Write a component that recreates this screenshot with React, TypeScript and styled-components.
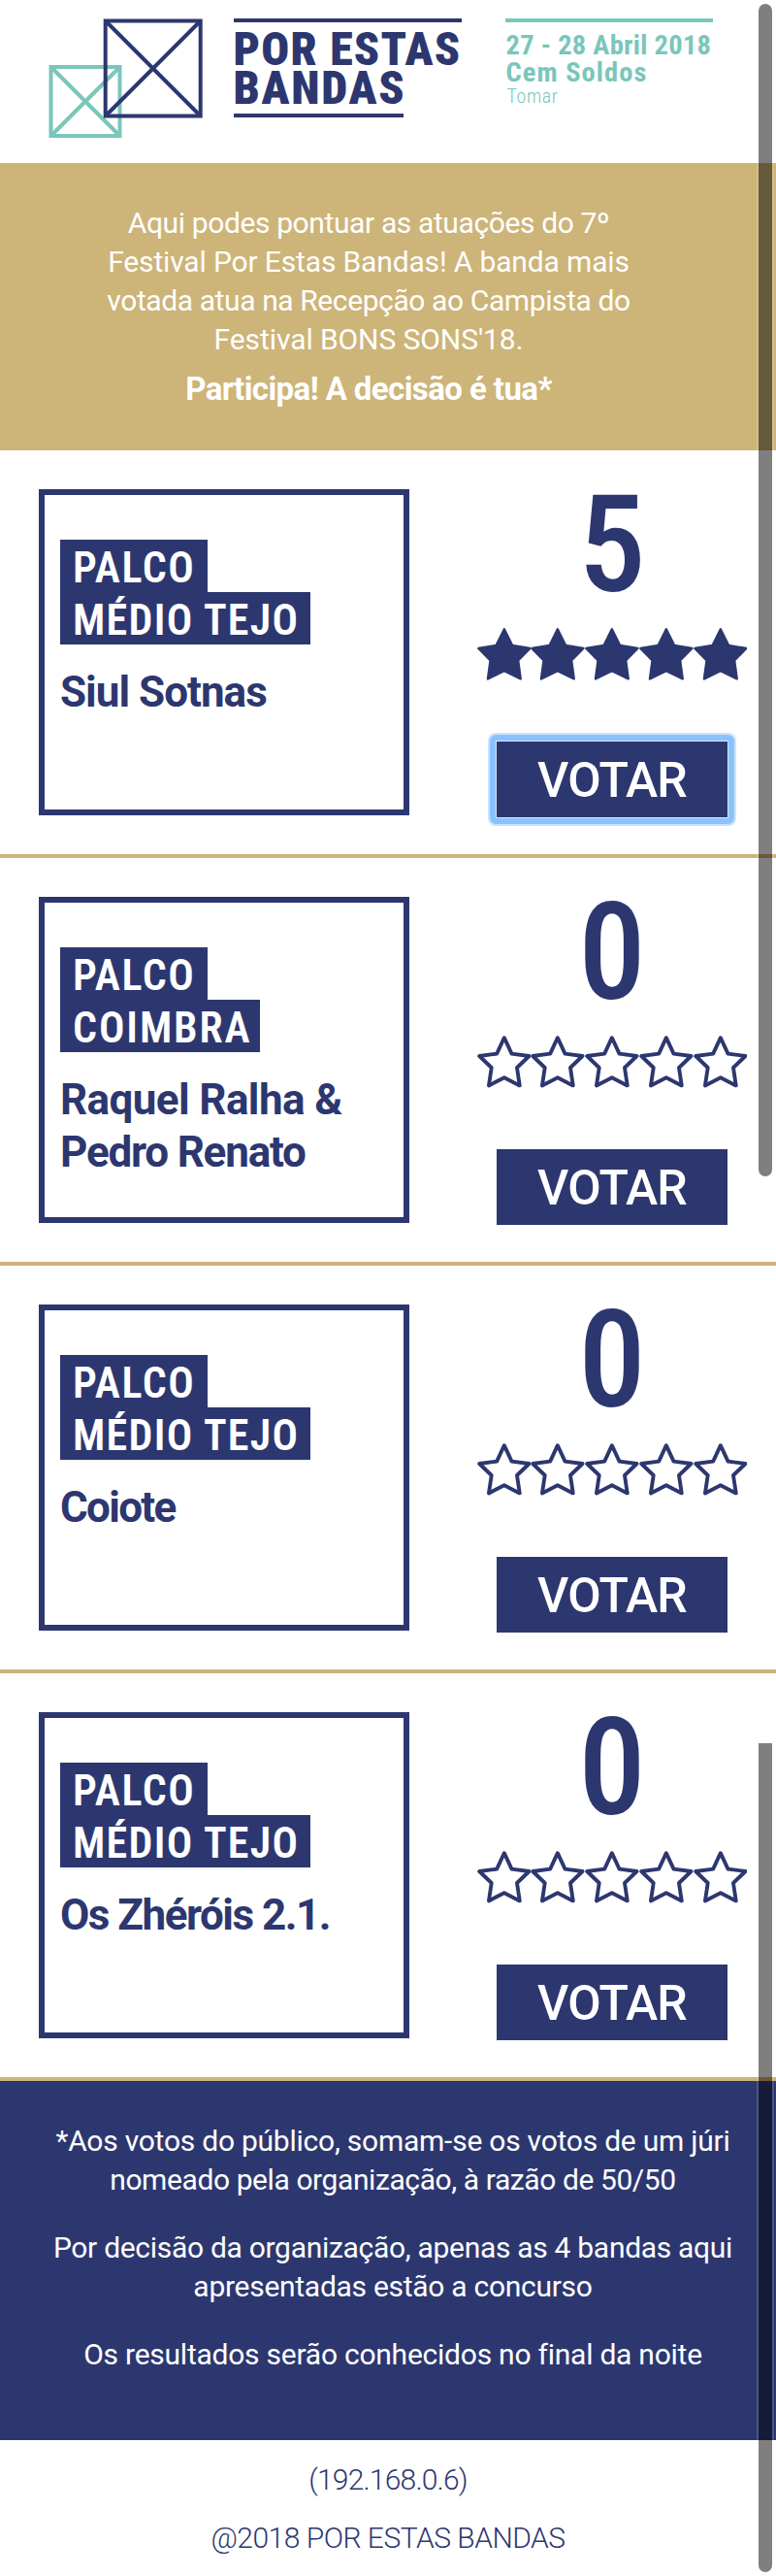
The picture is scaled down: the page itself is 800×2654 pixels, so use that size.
import React from 'react';
import styled, { createGlobalStyle, css } from 'styled-components';

const NAVY = '#2d376f';
const GOLD = '#cdb479';
const TEAL = '#7ac6bb';

const GlobalStyle = createGlobalStyle`
  *, *::before, *::after { box-sizing: border-box; }
  html, body { margin: 0; padding: 0; background: #fff; }
  body {
    font-family: Roboto, "Liberation Sans", sans-serif;
    color: ${NAVY};
    overflow: hidden;
  }
  h1, h2, h3, p { margin: 0; font-weight: inherit; }
`;

const Page = styled.div`
  position: relative;
  width: 800px;
  height: 2654px;
  overflow: hidden;
`;

/* One line of text with its own tracking */
const Line = styled.span<{ $tracking?: number }>`
  display: block;
  white-space: nowrap;
  letter-spacing: ${({ $tracking = 0 }) => $tracking}px;
`;

const Header = styled.header`
  display: flex;
  align-items: flex-start;
  height: 168px;
  padding: 18.5px 0 0 50px;
  font-stretch: 75%;
`;

const Mark = styled.svg`
  display: block;
  flex: none;
  width: 160px;
  height: 124px;
  margin-right: 30.5px;
`;

const Wordmark = styled.h1`
  flex: none;
  width: 235.5px;
  margin-right: 44.5px;
  padding-top: 8.8px;
  border-top: 4.5px solid ${NAVY};
  font-size: 48px;
  font-weight: 900;
  line-height: 39.2px;

  &::after {
    content: '';
    display: block;
    width: 175px;
    height: 4.5px;
    margin-top: 7px;
    background: ${NAVY};
  }
`;

const EventInfo = styled.div`
  flex: none;
  width: 214.5px;
  padding: 10.5px 0 0 1px;
  border-top: 4px solid ${TEAL};
  color: ${TEAL};
  font-size: 28.5px;
  font-weight: 700;
  line-height: 27.5px;
`;

const Town = styled(Line)`
  font-size: 20px;
  font-weight: 300;
  line-height: 22px;
  padding-left: 1px;
`;

const Intro = styled.section`
  height: 296px;
  padding: 42px 40px 0 0;
  background: ${GOLD};
  color: #fff;
  font-size: 30px;
  line-height: 40px;
  text-align: center;
`;

const Callout = styled.p`
  margin-top: 11px;
  font-size: 33px;
  font-weight: 700;
`;

const BandRow = styled.article`
  display: flex;
  height: 420px;
  padding: 40px 0 0 40px;
  border-bottom: 4px solid ${GOLD};
`;

const Card = styled.div`
  flex: none;
  width: 382px;
  height: 336px;
  padding: 46px 0 0 16px;
  border: 6px solid ${NAVY};
`;

const StageLabel = styled.div<{ $width: number }>`
  width: ${({ $width }) => $width}px;
  height: 54px;
  padding: 2px 0 0 13px;
  background: ${NAVY};
  color: #fff;
  font-size: 44px;
  font-stretch: 75%;
  font-weight: 600;
  line-height: 54px;
`;

const BandName = styled.h2`
  margin-top: 22px;
  font-size: 44px;
  font-weight: 700;
  line-height: 54px;
`;

const VotePanel = styled.div`
  display: flex;
  flex-direction: column;
  align-items: center;
  flex: none;
  width: 280px;
  margin: -8px 0 0 69px;
`;

const Score = styled.div`
  height: 130px;
  font-size: 139px;
  font-stretch: 75%;
  font-weight: 500;
  line-height: 132px;
`;

const Stars = styled.div`
  display: flex;
  margin-top: 21px;
`;

const StarIcon = styled.svg`
  display: block;
  width: 55.7px;
  height: 54px;
`;

const VoteButton = styled.button<{ $focused?: boolean }>`
  position: relative;
  width: 238px;
  height: 78px;
  margin-top: 63px;
  padding: 0;
  border: 0;
  background: ${NAVY};
  color: #fff;
  font-family: Roboto, "Liberation Sans", sans-serif;
  font-size: 50px;
  font-weight: 500;
  letter-spacing: -0.8px;
  line-height: 80px;
  outline: none;

  ${({ $focused }) =>
    $focused &&
    css`
      &::after {
        content: '';
        position: absolute;
        inset: -7px;
        border: 6px solid #8ac2ff;
        border-radius: 6px;
        box-shadow: 0 0 0 2px #cbe3fb, inset 0 0 0 1px #d3e9fc;
      }
    `}
`;

const Rules = styled.section`
  height: 370px;
  padding: 42px 0 0 10px;
  background: ${NAVY};
  color: #fff;
  font-size: 30px;
  line-height: 40px;
  text-align: center;
`;

const Rule = styled.p`
  margin-bottom: 30px;
`;

const Footer = styled.footer`
  display: flex;
  flex-direction: column;
  gap: 20px;
  padding-top: 21px;
  font-size: 30px;
  font-weight: 300;
  line-height: 40px;
  text-align: center;
`;

/* Overlay scrollbar thumbs lying over the page content */
const Thumb = styled.div<{ $top: number; $height: number; $flatTop?: boolean }>`
  position: absolute;
  top: ${({ $top }) => $top}px;
  right: 4px;
  width: 14px;
  height: ${({ $height }) => $height}px;
  border-radius: ${({ $flatTop }) => ($flatTop ? '0 0 7px 7px' : '7px')};
  background: rgba(0, 0, 0, 0.5);
  box-shadow: 0 0 0 2px rgba(255, 255, 255, 0.15);
`;

type Text = { text: string; tracking: number };
type Band = {
  stage: (Text & { width: number })[];
  name: Text[];
  score: number;
  focused?: boolean;
};

const PALCO = { text: 'PALCO', tracking: 1.57, width: 152 };
const MEDIO_TEJO = { text: 'MÉDIO TEJO', tracking: 1.3, width: 258 };

const bands: Band[] = [
  { stage: [PALCO, MEDIO_TEJO], name: [{ text: 'Siul Sotnas', tracking: -0.98 }], score: 5, focused: true },
  {
    stage: [PALCO, { text: 'COIMBRA', tracking: 1.87, width: 206 }],
    name: [
      { text: 'Raquel Ralha &', tracking: -0.6 },
      { text: 'Pedro Renato', tracking: -1.2 },
    ],
    score: 0,
  },
  { stage: [PALCO, MEDIO_TEJO], name: [{ text: 'Coiote', tracking: -1.7 }], score: 0 },
  { stage: [PALCO, MEDIO_TEJO], name: [{ text: 'Os Zhéróis 2.1.', tracking: -1.5 }], score: 0 },
];

const intro: Text[] = [
  { text: 'Aqui podes pontuar as atuações do 7º', tracking: -0.38 },
  { text: 'Festival Por Estas Bandas! A banda mais', tracking: -0.15 },
  { text: 'votada atua na Recepção ao Campista do', tracking: -0.4 },
  { text: "Festival BONS SONS'18.", tracking: -0.08 },
];

const rules: Text[][] = [
  [
    { text: '*Aos votos do público, somam-se os votos de um júri', tracking: -0.24 },
    { text: 'nomeado pela organização, à razão de 50/50', tracking: -0.41 },
  ],
  [
    { text: 'Por decisão da organização, apenas as 4 bandas aqui', tracking: -0.3 },
    { text: 'apresentadas estão a concurso', tracking: -0.28 },
  ],
  [{ text: 'Os resultados serão conhecidos no final da noite', tracking: -0.24 }],
];

const Lines = ({ lines }: { lines: Text[] }) => (
  <>
    {lines.map((l) => (
      <Line key={l.text} $tracking={l.tracking}>
        {l.text}
      </Line>
    ))}
  </>
);

const Star = ({ filled }: { filled: boolean }) => (
  <StarIcon viewBox="0 0 56 54" preserveAspectRatio="none">
    {filled ? (
      <path
        d="M28 1.2 L36.4 18 L54.7 21 L42.4 33.3 L45 52.4 L28 44.2 L11 52.4 L13.6 33.3 L1.3 21 L19.6 18 Z"
        fill={NAVY}
        stroke={NAVY}
        strokeWidth="2.4"
        strokeLinejoin="round"
      />
    ) : (
      <path
        d="M28 2.2 L35.7 18.6 L53.8 21 L41.2 33 L44 51.4 L28 43.2 L12 51.4 L14.8 33 L2.2 21 L20.3 18.6 Z"
        fill="none"
        stroke={NAVY}
        strokeWidth="3.9"
        strokeLinejoin="round"
      />
    )}
  </StarIcon>
);

const BandEntry = ({ band }: { band: Band }) => (
  <BandRow>
    <Card>
      {band.stage.map((s) => (
        <StageLabel key={s.text} $width={s.width}>
          <Line $tracking={s.tracking}>{s.text}</Line>
        </StageLabel>
      ))}
      <BandName>
        <Lines lines={band.name} />
      </BandName>
    </Card>
    <VotePanel>
      <Score>{band.score}</Score>
      <Stars>
        {[1, 2, 3, 4, 5].map((n) => (
          <Star key={n} filled={n <= band.score} />
        ))}
      </Stars>
      <VoteButton $focused={band.focused}>VOTAR</VoteButton>
    </VotePanel>
  </BandRow>
);

export default function App() {
  return (
    <Page>
      <GlobalStyle />
      <Header>
        <Mark viewBox="0 0 160 124" fill="none" strokeWidth="4">
          <g stroke={TEAL}>
            <rect x="2.5" y="50" width="71" height="71" />
            <path d="M2.5 50 L73.5 121 M73.5 50 L2.5 121" />
          </g>
          <g stroke={NAVY}>
            <rect x="58.7" y="2.5" width="98" height="98" />
            <path d="M58.7 2.5 L156.7 100.5 M156.7 2.5 L58.7 100.5" />
          </g>
        </Mark>
        <Wordmark>
          <Line $tracking={1.2}>POR ESTAS</Line>
          <Line $tracking={1.75}>BANDAS</Line>
        </Wordmark>
        <EventInfo>
          <Line $tracking={0.28}>27 - 28 Abril 2018</Line>
          <Line $tracking={1.03}>Cem Soldos</Line>
          <Town $tracking={0.6}>Tomar</Town>
        </EventInfo>
      </Header>

      <Intro>
        <p>
          <Lines lines={intro} />
        </p>
        <Callout>
          <Line $tracking={-0.58}>Participa! A decisão é tua*</Line>
        </Callout>
      </Intro>

      <main>
        {bands.map((b) => (
          <BandEntry key={b.name[0].text} band={b} />
        ))}
      </main>

      <Rules>
        {rules.map((r) => (
          <Rule key={r[0].text}>
            <Lines lines={r} />
          </Rule>
        ))}
      </Rules>

      <Footer>
        <Line $tracking={-0.8}>(192.168.0.6)</Line>
        <Line $tracking={-0.5}>@2018 POR ESTAS BANDAS</Line>
      </Footer>

      <Thumb $top={4} $height={1208} />
      <Thumb $top={1796} $height={854} $flatTop />
    </Page>
  );
}
